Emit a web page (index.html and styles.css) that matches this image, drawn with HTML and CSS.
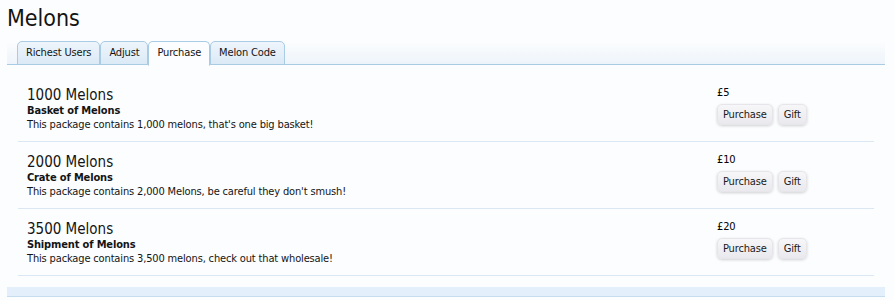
FILE: index.html
```html
<!DOCTYPE html>
<html lang="en">

<head>
  <meta charset="UTF-8">
  <meta name="viewport" content="width=device-width, initial-scale=1.0">
  <title>Melons</title>
  <link rel="stylesheet" href="styles.css">
</head>

<body>
  <div class="page">
    <h1 class="title">Melons</h1>
    <div class="tabBar">
      <ul class="tabs">
        <li class="tab">Richest Users</li>
        <li class="tab">Adjust</li>
        <li class="tab active">Purchase</li>
        <li class="tab">Melon Code</li>
      </ul>
    </div>
    <ol class="packages">
      <li class="package">
        <div class="info">
          <h3>1000 Melons</h3>
          <h4>Basket of Melons</h4>
          <p>This package contains 1,000 melons, that's one big basket!</p>
        </div>
        <div class="buy">
          <div class="price">&pound;5</div>
          <div class="btns">
            <button class="btn">Purchase</button>
            <button class="btn">Gift</button>
          </div>
        </div>
      </li>
      <li class="package">
        <div class="info">
          <h3>2000 Melons</h3>
          <h4>Crate of Melons</h4>
          <p>This package contains 2,000 Melons, be careful they don't smush!</p>
        </div>
        <div class="buy">
          <div class="price">&pound;10</div>
          <div class="btns">
            <button class="btn">Purchase</button>
            <button class="btn">Gift</button>
          </div>
        </div>
      </li>
      <li class="package">
        <div class="info">
          <h3>3500 Melons</h3>
          <h4>Shipment of Melons</h4>
          <p>This package contains 3,500 melons, check out that wholesale!</p>
        </div>
        <div class="buy">
          <div class="price">&pound;20</div>
          <div class="btns">
            <button class="btn">Purchase</button>
            <button class="btn">Gift</button>
          </div>
        </div>
      </li>
    </ol>
    <div class="footBar"></div>
  </div>
</body>

</html>
```

FILE: styles.css
```css
* {
	margin: 0;
	padding: 0;
	box-sizing: border-box;
}

body {
	background: #fcfdfe;
	font-family: 'DejaVu Sans Condensed', 'DejaVu Sans', sans-serif;
	font-size: 11px;
	letter-spacing: -0.15px;
	color: #141414;
}

.page {
	width: 878px;
	margin-left: 7px;
}

.title {
	font-size: 23px;
	font-weight: normal;
	letter-spacing: 0;
	line-height: 26px;
	padding-top: 5px;
	height: 41px;
	color: #141414;
}

.tabBar {
	height: 24px;
	border-bottom: 1px solid #a9cbe4;
	background: linear-gradient(to bottom, #fcfdfe, #edf4fa);
	padding-left: 10px;
}

.tabs {
	list-style: none;
	display: flex;
	height: 24px;
}

.tab {
	height: 24px;
	padding: 0 8px;
	line-height: 22px;
	border: 1px solid #a9cbe4;
	border-radius: 5px 5px 0 0;
	background: linear-gradient(to bottom, #eef5fb, #dbeaf6);
	color: #141414;
}

.tab.active {
	background: #fcfdfe;
	border-bottom-color: #fcfdfe;
	height: 25px;
}

.packages {
	list-style: none;
	padding: 10px 11px 0 11px;
}

.package {
	display: flex;
	justify-content: space-between;
	height: 67px;
	padding: 11px 0 0 9px;
	border-bottom: 1px solid #dbe8f3;
}

.info h3 {
	font-size: 15px;
	font-weight: normal;
	letter-spacing: 0;
	line-height: 18px;
}

.info h4 {
	font-size: 11px;
	font-weight: bold;
	line-height: 13px;
}

.info p {
	line-height: 15px;
}

.buy {
	width: 157px;
}

.price {
	line-height: 14px;
	color: #000;
}

.btns {
	display: flex;
	gap: 5px;
	margin-top: 4px;
}

.btn {
	font-family: inherit;
	font-size: 11px;
	letter-spacing: -0.15px;
	color: #1a1a1a;
	height: 21px;
	padding: 0 5px;
	border: 1px solid #e6e6ea;
	border-radius: 5px;
	background: linear-gradient(to bottom, #f7f7f9, #e9e9ee);
	box-shadow: 0 1px 3px rgba(0, 0, 0, .18);
}

.footBar {
	margin-top: 11px;
	height: 10px;
	background: #e3effa;
	border-bottom: 1px solid #c6ddef;
}
```
